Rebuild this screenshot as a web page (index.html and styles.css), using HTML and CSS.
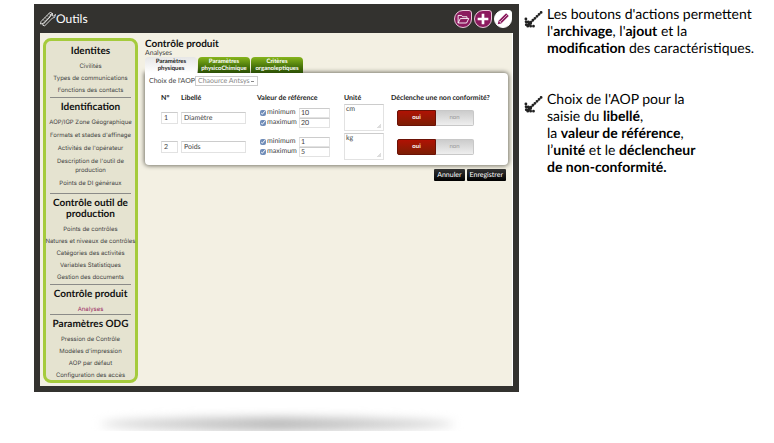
FILE: index.html
```html
<!DOCTYPE html>
<html lang="fr">
<head>
<meta charset="utf-8">
<meta name="viewport" content="width=device-width, initial-scale=1">
<title>Outils – Contrôle produit</title>
<link rel="stylesheet" href="styles.css">
</head>
<body>
<div class="page">
  <div class="demo">
    <div class="window">
      <header class="topbar">
        <svg class="tools" viewBox="0 0 16 16" aria-hidden="true">
          <g fill="none" stroke="#fff" stroke-width=".8">
            <path d="M1 10.500 10.500 1l2 2L3 12.500l-2.500.5z"/>
            <path d="M3 8.500l1 1M5 6.500l1 1M7 4.500l1 1M9 2.500l1 1"/>
            <path d="M2.500 14l2 1 8-8 2-.5 1-3-2 1.500-1.500-.5.5-2-2 1-.5 2.500z"/>
          </g>
        </svg>
        <span class="brand">Outils</span>
        <div class="actions">
          <button type="button" class="action" aria-label="Archiver">
            <svg viewBox="0 0 18 18"><path fill="none" stroke="#fff" d="M3.500 13.500V5h4l1 1.500h5v2M3.500 13.500l2.500-5h9.500l-2.500 5z"/></svg>
          </button>
          <button type="button" class="action" aria-label="Ajouter">
            <svg viewBox="0 0 18 18"><path fill="none" stroke="#fff" stroke-width="3" d="M9 3v12M3 9h12"/></svg>
          </button>
          <button type="button" class="action action-light" aria-label="Modifier">
            <svg viewBox="0 0 18 18"><path fill="#8b1a5e" d="M3 15l1-4 8.500-8.500 3 3-8.500 8.500z"/><path stroke="#fff" stroke-width=".7" d="M5.500 12.500l8-8M4.500 11l2.500 2.500"/></svg>
          </button>
        </div>
      </header>
      <div class="body">
        <nav class="sidebar">
          <section class="first">
            <h2>Identites</h2>
            <ul><li><a href="#">Civilités</a></li><li><a href="#">Types de communications</a></li><li><a href="#">Fonctions des contacts</a></li></ul>
          </section>
          <section class="roomy">
            <h2>Identification</h2>
            <ul><li><a href="#">AOP/IGP Zone Géographique</a></li><li><a href="#">Formats et stades d'affinage</a></li><li><a href="#">Activités de l'opérateur</a></li><li><a href="#">Description de l'outil de<br>production</a></li><li><a href="#">Points de DI généraux</a></li></ul>
          </section>
          <section class="tools-section">
            <h2>Contrôle outil de production</h2>
            <ul><li><a href="#">Points de contrôles</a></li><li><a href="#">Natures et niveaux de contrôles</a></li><li><a href="#">Catégories des activités</a></li><li><a href="#">Variables Statistiques</a></li><li><a href="#">Gestion des documents</a></li></ul>
          </section>
          <section>
            <h2>Contrôle produit</h2>
            <ul><li><a href="#" class="current">Analyses</a></li></ul>
          </section>
          <section>
            <h2>Paramètres ODG</h2>
            <ul><li><a href="#">Pression de Contrôle</a></li><li><a href="#">Modèles d'impression</a></li><li><a href="#">AOP par défaut</a></li><li><a href="#">Configuration des accès</a></li></ul>
          </section>
        </nav>
        <main>
          <h1>Contrôle produit</h1>
          <p class="subtitle">Analyses</p>
          <div class="tabs">
            <button type="button" class="tab tab-on">Paramètres<br>physiques</button>
            <button type="button" class="tab">Paramètres<br>physicoChimique</button>
            <button type="button" class="tab">Critères<br>organoleptiques</button>
          </div>
          <form class="panel">
            <div class="choice">
              <label for="aop">Choix de l'AOP</label>
              <select id="aop"><option>Chaource Antsys</option></select>
            </div>
            <table>
              <colgroup><col class="c-num"><col class="c-name"><col class="c-ref"><col class="c-unit"><col></colgroup>
              <thead><tr><th>N°</th><th>Libellé</th><th>Valeur de référence</th><th>Unité</th><th>Déclenche une non conformité?</th></tr></thead>
              <tbody>
                <tr>
                  <td><input class="num" value="1" aria-label="N°"></td>
                  <td><input class="name" value="Diamètre" aria-label="Libellé"></td>
                  <td>
                    <div class="bound"><input type="checkbox" id="min1" checked><label for="min1">minimum</label><input class="val" value="10" aria-label="Valeur minimum"></div>
                    <div class="bound"><input type="checkbox" id="max1" checked><label for="max1">maximum</label><input class="val" value="20" aria-label="Valeur maximum"></div>
                  </td>
                  <td><textarea aria-label="Unité">cm</textarea></td>
                  <td><div class="toggle"><button type="button" class="yes" aria-pressed="true">oui</button><button type="button" class="no" aria-pressed="false">non</button></div></td>
                </tr>
                <tr>
                  <td><input class="num" value="2" aria-label="N°"></td>
                  <td><input class="name" value="Poids" aria-label="Libellé"></td>
                  <td>
                    <div class="bound"><input type="checkbox" id="min2" checked><label for="min2">minimum</label><input class="val" value="1" aria-label="Valeur minimum"></div>
                    <div class="bound"><input type="checkbox" id="max2" checked><label for="max2">maximum</label><input class="val" value="5" aria-label="Valeur maximum"></div>
                  </td>
                  <td><textarea aria-label="Unité">kg</textarea></td>
                  <td><div class="toggle"><button type="button" class="yes" aria-pressed="true">oui</button><button type="button" class="no" aria-pressed="false">non</button></div></td>
                </tr>
              </tbody>
            </table>
          </form>
          <div class="footer">
            <button type="button">Annuler</button>
            <button type="button">Enregistrer</button>
          </div>
        </main>
      </div>
    </div>
    <div class="ground"></div>
  </div>
  <aside class="notes">
    <div class="note">
      <svg class="arrow" viewBox="0 0 20 20" aria-hidden="true"><path d="M18 2.500 4.500 15.500M2 9.500l.5 7.500h9.500M4.500 12.500l3 2"/></svg>
      <p>Les boutons d'actions permettent<br>l'<b>archivage</b>, l'<b>ajout</b> et la<br><b>modification</b> des caractéristiques.</p>
    </div>
    <div class="note">
      <svg class="arrow" viewBox="0 0 20 20" aria-hidden="true"><path d="M18 2.500 4.500 15.500M2 9.500l.5 7.500h9.500M4.500 12.500l3 2"/></svg>
      <p>Choix de l'AOP pour la<br>saisie du <b>libellé</b>,<br>la <b>valeur de référence</b>,<br>l’<b>unité</b> et le <b>déclencheur<br>de non-conformité.</b></p>
    </div>
  </aside>
</div>
</body>
</html>
```
FILE: styles.css
```css
* { box-sizing: border-box; }
body {
  margin: 0;
  background: #fff;
  color: #444;
  font-family: "Century Gothic", Lato, sans-serif;
  font-size: 7px;
  line-height: 9px;
  text-rendering: geometricPrecision;
}
h1, h2, p, ul { margin: 0; padding: 0; }
ul { list-style: none; }
a { color: inherit; text-decoration: none; }
button, input, select, textarea { font: inherit; color: inherit; margin: 0; text-rendering: inherit; }
button { cursor: pointer; }

.page {
  display: grid;
  grid-template-columns: minmax(0, 1fr) 255px;
  padding: 4px 0 0 34px;
}
.window {
  background: #33322f;
  padding: 0 6px 6px;
}
.topbar {
  display: flex;
  align-items: center;
  height: 29px;
}
.tools { width: 16px; height: 16px; }
.brand { color: #fff; font-size: 12px; line-height: 16px; }
.actions { display: flex; gap: 2px; margin-left: auto; padding-right: 1px; }
.action {
  display: block;
  width: 18px;
  height: 18px;
  padding: 0;
  border: 1px solid #e9c9da;
  border-radius: 50% 3px 50% 50%;
  background: #8b1a5e;
}
.action svg { display: block; width: 16px; height: 16px; }
.action-light { background: #fff; border-color: #fff; }

.body {
  display: flex;
  align-items: flex-start;
  gap: 7px;
  padding: 5px 4px 3px 3px;
  background: #f3f0e3;
  border: solid #fff;
  border-width: 0 1px 0 0;
}
.sidebar {
  flex: none;
  width: 95px;
  border: 3px solid #a5cb3c;
  border-radius: 8px;
  background: #e5e3d0;
  text-align: center;
  white-space: nowrap;
}
.sidebar section {
  margin: 0 4px;
  padding: 4px 0 0;
  border-bottom: 1px solid #8b8b88;
}
.sidebar .first { padding: 5px 0 2px; }
.sidebar .roomy { padding-bottom: 5px; }
.sidebar .tools-section { padding-bottom: 2px; }
.sidebar section:last-child { border: 0; }
.sidebar h2 {
  margin: 0 -2px 5px;
  color: #111;
  font-size: 10px;
  line-height: 11px;
  white-space: normal;
}
.sidebar ul {
  display: grid;
  grid-template-columns: minmax(0, 1fr);
  gap: 3px;
  margin: 0 -4px;
  font-family: "Century Gothic", Inter, sans-serif;
  font-size: 6px;
}
.sidebar .roomy ul { gap: 4px; }
.sidebar li { display: flex; justify-content: center; }
.sidebar .current { color: #9b2a63; }

main { flex: 1; min-width: 0; }
h1 { color: #111; font-size: 10px; line-height: 12px; }
.subtitle { line-height: 7px; }
.tabs { display: flex; gap: 1px; position: relative; }
.tab {
  width: 52px;
  height: 16px;
  padding: 0;
  border: 0;
  border-radius: 4px 4px 0 0;
  background: linear-gradient(#86b51c, #4d7a0c 55%, #2b4f06);
  color: #fff;
  font-size: 6px;
  font-weight: bold;
  line-height: 7px;
}
.tab-on { background: linear-gradient(#e6e6e6, #fff); color: #222; }
.panel {
  padding: 3px 0 4px;
  border-radius: 0 4px 4px 4px;
  background: #fff;
  box-shadow: 0 0 4px 1px #77756a;
}
.choice { display: flex; align-items: center; padding-left: 4px; }
.choice label { width: 46px; white-space: nowrap; }
select {
  appearance: none;
  width: 63px;
  height: 10px;
  padding: 0 2px;
  border: 1px solid #ccc;
  border-radius: 0;
  color: #888;
  line-height: 8px;
  background: linear-gradient(#888, #888) right 3px center / 3px 1px no-repeat #fff;
}
table {
  width: 100%;
  margin-top: 8px;
  border-collapse: collapse;
  table-layout: fixed;
}
th, td { padding: 0; text-align: left; white-space: nowrap; }
th { height: 9px; color: #222; vertical-align: top; }
td { height: 29px; vertical-align: middle; }
th:first-child, td:first-child { padding-left: 16px; }
.c-num { width: 36px; }
.c-name { width: 76px; }
.c-ref { width: 87px; }
.c-unit { width: 47px; }
td input:not([type]), textarea {
  display: block;
  border: 1px solid #e2e2e2;
  border-top-color: #ccc;
  background: #fff;
  outline: 0;
}
.num, .name { height: 12px; padding: 0 2px; }
.num { width: 17px; }
.name { width: 65px; }
.bound { display: flex; align-items: center; height: 10px; padding-left: 3px; }
.bound label { width: 33px; padding-left: 1px; }
.bound input[type="checkbox"] { width: 6px; height: 6px; accent-color: #6f8cb8; }
td .val { width: 31px; height: 10px; padding: 0 1px; }
textarea {
  width: 40px;
  height: 27px;
  padding: 0 1px;
  resize: none;
  overflow: hidden;
}
td textarea {
  background: linear-gradient(135deg, transparent 50%, #ddd 50%) right 2px bottom 2px / 4px 4px no-repeat #fff;
}
.toggle {
  display: flex;
  width: 77px;
  height: 16px;
  margin-left: 6px;
}
.toggle button {
  flex: 1;
  padding: 0;
  border: 1px solid #c8c8c8;
  font-size: 6px;
  line-height: 8px;
}
.toggle .yes {
  border-color: #6b1206;
  border-radius: 2px 0 0 2px;
  background: linear-gradient(#b01204, #7c1e04);
  color: #fff;
  font-weight: bold;
}
.toggle .no {
  border-left: 0;
  border-radius: 0 2px 2px 0;
  background: linear-gradient(#ccc, #eee);
  color: #999;
}
.footer { display: flex; justify-content: flex-end; gap: 2px; padding: 4px 2px 0 0; }
.footer button {
  height: 12px;
  padding: 0 3px;
  border: 0;
  border-radius: 1px;
  background: linear-gradient(#333, #000);
  color: #fff;
}
.ground {
  height: 14px;
  margin: 25px 64px 0 66px;
  border-radius: 50%;
  background: linear-gradient(90deg, #ddd, #bbb 50%, #ddd);
  filter: blur(5px);
}

.notes {
  padding: 1px 0 0 5px;
  color: #000;
  font-size: 14px;
  line-height: 17px;
}
.note { display: flex; gap: 4px; margin-bottom: 34px; white-space: nowrap; }
.arrow { flex: none; width: 19px; height: 19px; margin-top: 5px; }
.arrow path {
  fill: none;
  stroke: #222;
  stroke-width: 3;
  stroke-linecap: round;
  stroke-dasharray: 0 3;
}
```
